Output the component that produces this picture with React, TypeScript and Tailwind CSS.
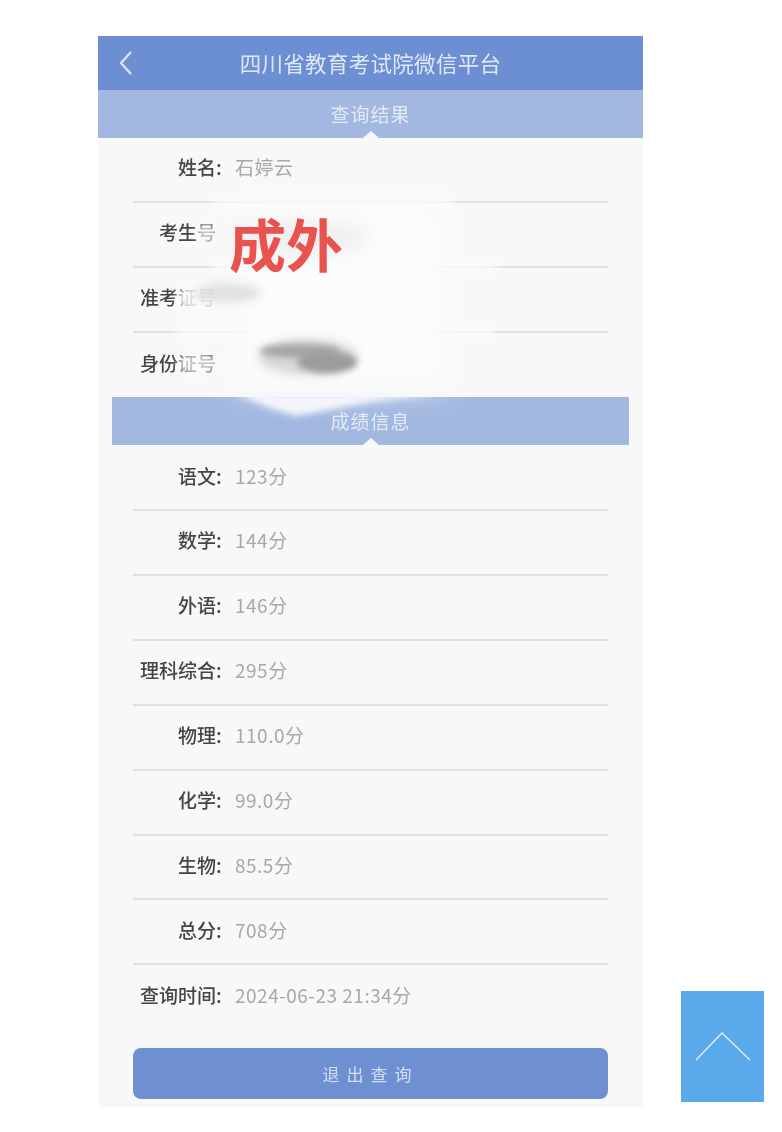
const fontStack = { fontFamily: '"Noto Sans CJK SC", "Roboto", sans-serif' };

function Row({ label, value, last, noColon }: { label: string; value?: string; last?: boolean; noColon?: boolean }) {
  return (
    <div className={`flex h-[64.86px] items-center pb-[4px] ${last ? '' : 'border-b-2 border-[#e0e0e0]'}`}>
      <div className="mr-[11px] w-[91px] shrink-0 text-right text-[19px] font-medium whitespace-nowrap text-[#454545] blur-[0.5px]">
        {label}
        <span className={`inline-block w-[8px] text-left ${noColon ? 'text-transparent' : ''}`}>:</span>
      </div>
      {value && <div className="text-[19px] tracking-[0.5px] whitespace-nowrap text-[#a8a8a8] blur-[0.5px]">{value}</div>}
    </div>
  );
}

function Banner({ title, inset }: { title: string; inset?: boolean }) {
  return (
    <div className={`relative flex h-[48px] items-center justify-center bg-[#a3b8e1] ${inset ? 'mx-[14px]' : ''}`}>
      <span className="text-[19px] tracking-[1px] text-[#e4eaf5] blur-[0.5px]">{title}</span>
      {/* little notch pointing up */}
      <div className="absolute bottom-0 left-1/2 h-0 w-0 -translate-x-1/2 border-x-[8px] border-b-[7px] border-x-transparent border-b-[#f8f8f8]" />
    </div>
  );
}

// the retouched patches of the photo, in page coordinates
function Smudges() {
  return (
    <svg className="pointer-events-none absolute inset-0" width="782" height="1132" viewBox="0 0 782 1132" fill="none">
      <defs>
        <filter id="wide" x="-30%" y="-60%" width="160%" height="220%">
          <feGaussianBlur stdDeviation="16" />
        </filter>
        <filter id="soft" x="-30%" y="-30%" width="160%" height="160%">
          <feGaussianBlur stdDeviation="9" />
        </filter>
        <filter id="mid" x="-30%" y="-100%" width="160%" height="300%">
          <feGaussianBlur stdDeviation="5" />
        </filter>
        <filter id="tight" x="-30%" y="-50%" width="160%" height="200%">
          <feGaussianBlur stdDeviation="3" />
        </filter>
      </defs>
      <rect x="240" y="205" width="205" height="180" fill="#fcfcfc" filter="url(#wide)" />
      <rect x="212" y="197" width="240" height="10" fill="#fbfbfb" filter="url(#mid)" />
      <rect x="212" y="262" width="285" height="10" fill="#fbfbfb" filter="url(#mid)" />
      <rect x="176" y="327" width="318" height="10" fill="#fbfbfb" filter="url(#mid)" />
      <ellipse cx="300" cy="238" rx="70" ry="18" fill="#efefef" filter="url(#soft)" />
      <ellipse cx="206" cy="234" rx="10" ry="12" fill="#fbfbfb" opacity="0.7" filter="url(#tight)" />
      <ellipse cx="198" cy="299" rx="22" ry="14" fill="#fbfbfb" opacity="0.85" filter="url(#tight)" />
      <ellipse cx="197" cy="364" rx="20" ry="12" fill="#fbfbfb" opacity="0.7" filter="url(#tight)" />
      <ellipse cx="228" cy="293" rx="34" ry="9" fill="#e0e0e0" filter="url(#mid)" />
      <ellipse cx="308" cy="357" rx="50" ry="18" fill="#d8d8d8" filter="url(#mid)" />
      <ellipse cx="300" cy="351" rx="40" ry="7" fill="#a6a6a6" filter="url(#tight)" />
      <ellipse cx="327" cy="362" rx="30" ry="11" fill="#9c9c9c" filter="url(#tight)" />
      <path d="M236 394 H436 L372 402 L296 416 L270 408 Z" fill="#f4f6fb" filter="url(#tight)" />
    </svg>
  );
}

export default function App() {
  return (
    <div className="relative h-[1132px] w-[782px] overflow-hidden bg-white" style={fontStack}>
      <div className="pt-[36px] pl-[98px]">
        <div className="flex h-[1071px] w-[545px] flex-col bg-[#f8f8f8]">
          {/* header */}
          <div className="relative flex h-[54px] items-center justify-center bg-[#6b8fd2]">
            <svg className="absolute top-[14px] left-[20px]" width="16" height="26" viewBox="0 0 16 26" fill="none">
              <path d="M13 2 L3 13 L13 24" stroke="#dfe6f4" strokeWidth="2.2" />
            </svg>
            <span className="text-[21.5px] tracking-[0.3px] text-[#e0e7f5] blur-[0.5px]">四川省教育考试院微信平台</span>
          </div>

          <Banner title="查询结果" />

          <div className="px-[35px]">
            <Row label="姓名" value="石婷云" />
            <Row label="考生号" noColon />
            <Row label="准考证号" noColon />
            <Row label="身份证号" noColon last />
          </div>

          <Banner title="成绩信息" inset />

          <div className="px-[35px] pt-px">
            <Row label="语文" value="123分" />
            <Row label="数学" value="144分" />
            <Row label="外语" value="146分" />
            <Row label="理科综合" value="295分" />
            <Row label="物理" value="110.0分" />
            <Row label="化学" value="99.0分" />
            <Row label="生物" value="85.5分" />
            <Row label="总分" value="708分" />
            <Row label="查询时间" value="2024-06-23 21:34分" last />
            <button className="mt-[18px] flex h-[51px] w-full items-center justify-center rounded-[8px] bg-[#6e90d3] text-[17px] tracking-[7px] text-[#d5def0] blur-[0.4px]">
              退出查询
            </button>
          </div>
        </div>
      </div>

      <Smudges />

      <div className="absolute top-[207px] left-[229px] text-[57px] leading-[70px] font-bold whitespace-nowrap text-[#e8534f]">
        成外
      </div>

      {/* back to top */}
      <div className="absolute top-[991px] left-[681px] flex h-[111px] w-[83px] items-center justify-center bg-[#5aa9ea]">
        <svg width="56" height="29" viewBox="0 0 56 29" fill="none">
          <path d="M1 28 L27 1 L55 28" stroke="#dcecfb" strokeWidth="1.5" />
        </svg>
      </div>
    </div>
  );
}
